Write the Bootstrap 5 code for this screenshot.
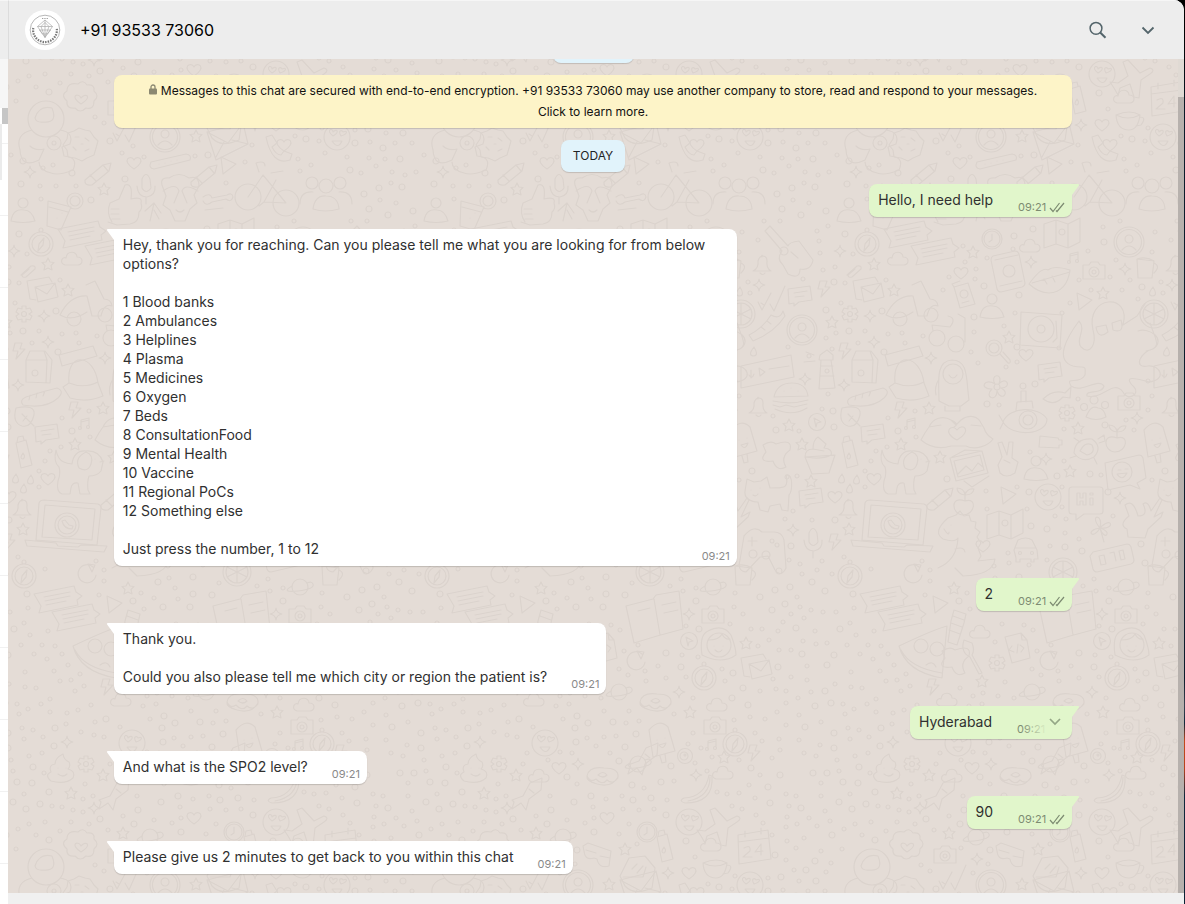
<!DOCTYPE html>
<html lang="en">
<head>
<meta charset="utf-8">
<meta name="viewport" content="width=device-width, initial-scale=1">
<title>Chat</title>
<link href="https://cdn.jsdelivr.net/npm/bootstrap@5.3.0/dist/css/bootstrap.min.css" rel="stylesheet">
<style>
body{font-family:Inter,"Liberation Sans",sans-serif;font-size:14px;line-height:19px;color:#303030;
  background:linear-gradient(#000 0,#000 30px,#0b1c2b 120px,#0b1c2b 75%,#3a4250 78%,#10283c 80%,#c4481c 82%,#b8411c 85%,#10283c 88%,#0c2234 100%)}
.desk{padding-right:1px}
.app-window{border-top-right-radius:10px;background:#fff}
.side-rail{width:8px;background:repeating-linear-gradient(#fff 0 71px,#f1f1f1 71px 72px)}
.rail-head{height:59px;background:#ededed;border-top:1px solid #f6f6f6}
.rail-search{height:49px;background:#f6f6f6}
.rail-thumb{height:16px;background:#c6c6c6}
.rail-row{height:56px;width:2px;background:#ebebeb}
.chat-head{height:59px;background:#ededed;border-top:1px solid #f6f6f6;border-left:1px solid #dcdcdc;padding:0 24px 0 16px;color:#000}
.chat-title{font-size:16px;line-height:21px;font-weight:400;margin-left:15px}
.head-tools{gap:26px}
.icon-btn{width:24px;height:24px;color:#54656b}
.chat-body{background:#e4dcd6}
.wallpaper{stroke:#dbd3cd;stroke-width:1.2;fill:none;stroke-linecap:round;stroke-linejoin:round}
.thread{padding:0 9% 19px;gap:12px}
.note-chip{background:#e1f3fb;border-radius:8px;padding:5px 12px 6px;line-height:21px;font-size:12px;color:#1f2426;box-shadow:0 1px 1px rgba(0,0,0,.15)}
.note-secure{background:#fdf4c8;color:#111;padding:5px 30px 6px}
.note-cut{width:81px;height:32px}
.bubble{border-radius:8px;padding:6px 7px 8px 9px;max-width:65%;box-shadow:0 1px 1px rgba(0,0,0,.16);gap:24px}
.bubble-in{background:#fff;border-top-left-radius:0}
.bubble-out{background:#e1f6cb;border-top-right-radius:0;gap:25px}
.bubble p{white-space:pre-line}
.tail{top:0;width:8px;height:12px}
.bubble-in .tail{right:100%;fill:#fff}
.bubble-out .tail{left:100%;fill:#e1f6cb}
.stamp{font-size:11px;line-height:15px;color:#8a8a8a;margin-bottom:-6px;gap:3px}
.bubble-out .stamp{color:#7d8b72}
.stamp-over{right:7px;bottom:8px}
.stamp-fade{background:linear-gradient(90deg,transparent,#e1f6cb 60%);width:44px;right:7px;bottom:2px;height:17px}
.more-btn{right:9px;top:8px;width:16px;height:16px;color:#94a686}
.bar{width:6px;background:#e0dad4;padding-top:38px}
.bar-thumb{background:#b7b1ad}
.chat-foot{height:11px;background:#f0f0f0}
</style>
</head>
<body>
<div class="desk vh-100">
<div class="app-window d-flex h-100 overflow-hidden">
  <aside class="side-rail flex-shrink-0">
    <div class="rail-head"></div><div class="rail-search"></div><div class="rail-thumb ms-auto w-75"></div><div class="rail-row"></div>
  </aside>
  <main class="d-flex flex-column flex-grow-1">
    <header class="chat-head d-flex align-items-center flex-shrink-0">
      <svg width="40" height="40" viewBox="0 0 40 40" fill="none" stroke="#777" stroke-width=".7" role="img" aria-label="Covid Resources">
        <circle cx="20" cy="20" r="20" fill="#fff" stroke="none"/>
        <circle cx="20" cy="20" r="14.8" stroke="#999"/>
        <path d="M12.500 16.500h15L20 27.500zM16 16.500l4 11 4-11-4-4zM12.500 16.500l7.500-6.500 7.500 6.500M14.500 20h11l-3 4h-5zM20 10v17" stroke="#aaa"/>
        <path d="M8.300 18A11.900 11.900 0 1 0 31.700 18" stroke="#777" stroke-width="2.200" stroke-dasharray="1.500 1.100"/>
        <path d="M17 8.500h6" stroke-dasharray="1 .7"/>
      </svg>
      <h1 class="chat-title mb-0 flex-grow-1">+91 93533 73060</h1>
      <div class="head-tools d-flex">
      <button class="icon-btn btn p-0 border-0 d-flex" aria-label="Search">
        <svg width="24" height="24" viewBox="0 0 24 24" fill="none" stroke="currentColor" stroke-width="1.500"><circle cx="10" cy="10.300" r="5.900"/><path d="M14.200 14.500l5.300 5.300" stroke-width="2"/></svg>
      </button>
      <button class="icon-btn btn p-0 border-0 d-flex" aria-label="Menu">
        <svg width="24" height="24" viewBox="0 0 24 24" fill="none" stroke="currentColor" stroke-width="1.800"><path d="M6.500 9.500l5.500 5.500 5.500-5.500"/></svg>
      </button>
      </div>
    </header>

    <section class="chat-body position-relative d-flex flex-grow-1 overflow-hidden">
      <svg class="wallpaper position-absolute top-0 start-0 w-100 h-100" aria-hidden="true">
        <defs><pattern id="doodles" width="413" height="748" patternUnits="userSpaceOnUse"></pattern></defs>
        <rect width="100%" height="100%" fill="url(#doodles)" stroke="none"/>
      </svg>
      <div class="thread position-relative d-flex flex-column justify-content-end flex-grow-1 overflow-hidden">
        <div class="note-chip note-cut align-self-center flex-shrink-0"></div>
        <div class="note-chip note-secure text-center">
          <svg width="8" height="11" viewBox="0 0 8 11" class="me-1 align-baseline" aria-hidden="true"><path d="M2 5V3a2 2 0 0 1 4 0v2" fill="none" stroke="#8b8871" stroke-width="1.300"/><rect y="4.500" width="8" height="6" rx="1" fill="#8b8871"/></svg>Messages to this chat are secured with end-to-end encryption. +91 93533 73060 may use another company to store, read and respond to your messages. Click to learn more.
        </div>
        <div class="note-chip align-self-center">TODAY</div>

        <div class="bubble bubble-out position-relative d-flex align-items-end align-self-end"><svg class="tail position-absolute" viewBox="0 0 8 12"><path d="M0 0h6q2 0 .5 2L0 11z"/></svg><p class="mb-0">Hello, I need help</p><span class="stamp d-flex align-items-center">09:21<svg width="16" height="11" viewBox="0 0 16 11" fill="none" stroke="currentColor" stroke-width="1.200"><path d="M1 6l3 3.500L10.500 1M7 8.500l1 1L15 1"/></svg></span></div>

        <div class="bubble bubble-in position-relative align-self-start w-100"><svg class="tail position-absolute" viewBox="0 0 8 12"><path d="M8 0H2Q0 0 1.500 2L8 11z"/></svg><p class="mb-0">Hey, thank you for reaching. Can you please tell me what you are looking for from below options?

1 Blood banks
2 Ambulances
3 Helplines
4 Plasma
5 Medicines
6 Oxygen
7 Beds
8 ConsultationFood
9 Mental Health
10 Vaccine
11 Regional PoCs
12 Something else

Just press the number, 1 to 12</p><span class="stamp stamp-over position-absolute">09:21</span></div>

        <div class="bubble bubble-out position-relative d-flex align-items-end align-self-end"><svg class="tail position-absolute" viewBox="0 0 8 12"><path d="M0 0h6q2 0 .5 2L0 11z"/></svg><p class="mb-0">2</p><span class="stamp d-flex align-items-center">09:21<svg width="16" height="11" viewBox="0 0 16 11" fill="none" stroke="currentColor" stroke-width="1.200"><path d="M1 6l3 3.500L10.500 1M7 8.500l1 1L15 1"/></svg></span></div>

        <div class="bubble bubble-in position-relative d-flex align-items-end align-self-start"><svg class="tail position-absolute" viewBox="0 0 8 12"><path d="M8 0H2Q0 0 1.500 2L8 11z"/></svg><p class="mb-0">Thank you.

Could you also please tell me which city or region the patient is?</p><span class="stamp">09:21</span></div>

        <div class="bubble bubble-out position-relative d-flex align-items-end align-self-end"><svg class="tail position-absolute" viewBox="0 0 8 12"><path d="M0 0h6q2 0 .5 2L0 11z"/></svg><p class="mb-0">Hyderabad</p><span class="stamp d-flex align-items-center pe-3 me-1">09:21</span><span class="stamp-fade position-absolute"></span><button class="more-btn btn p-0 border-0 d-flex position-absolute" aria-label="Message options"><svg width="16" height="16" viewBox="0 0 16 16" fill="none" stroke="currentColor" stroke-width="1.700"><path d="M3 5l5 5 5-5"/></svg></button></div>

        <div class="bubble bubble-in position-relative d-flex align-items-end align-self-start"><svg class="tail position-absolute" viewBox="0 0 8 12"><path d="M8 0H2Q0 0 1.500 2L8 11z"/></svg><p class="mb-0">And what is the SPO2 level?</p><span class="stamp">09:21</span></div>

        <div class="bubble bubble-out position-relative d-flex align-items-end align-self-end"><svg class="tail position-absolute" viewBox="0 0 8 12"><path d="M0 0h6q2 0 .5 2L0 11z"/></svg><p class="mb-0">90</p><span class="stamp d-flex align-items-center">09:21<svg width="16" height="11" viewBox="0 0 16 11" fill="none" stroke="currentColor" stroke-width="1.200"><path d="M1 6l3 3.500L10.500 1M7 8.500l1 1L15 1"/></svg></span></div>

        <div class="bubble bubble-in position-relative d-flex align-items-end align-self-start"><svg class="tail position-absolute" viewBox="0 0 8 12"><path d="M8 0H2Q0 0 1.500 2L8 11z"/></svg><p class="mb-0">Please give us 2 minutes to get back to you within this chat</p><span class="stamp">09:21</span></div>
      </div>
      <div class="bar position-relative flex-shrink-0"><div class="bar-thumb h-100"></div></div>
    </section>
    <footer class="chat-foot flex-shrink-0"></footer>
  </main>
</div>
</div>
<script src="https://cdn.jsdelivr.net/npm/bootstrap@5.3.0/dist/js/bootstrap.bundle.min.js"></script>
<script>
// Wallpaper doodles: each shape is drawn round its own centre, [radius, path].
const c=(x,y,r)=>`M${x-r} ${y}a${r} ${r} 0 1 0 ${2*r} 0a${r} ${r} 0 1 0 ${-2*r} 0`;
const shapes={
 star:[7,'M0-6l2 4 4 .5-3 3 1 4.500-4-2-4 2 1-4.500-3-3 4-.5z'],
 spark:[7,'M0-6q.5 5 6 6-5.500 1-6 6-.5-5-6-6 5.500-1 6-6z'],
 heart:[7,'M0 6C-14-3-3-9 0-3 3-9 14-3 0 6z'],
 cloud:[11,'M-7 6c-6-2-3-9 1-7 1-8 11-7 11-1 7 0 6 8 1 8z'],
 camera:[13,'M-11-6h6l2-3h7l2 3h5v14h-22z'+c(0,1,5)+c(0,1,2)],
 msg:[13,'M-13-7l22-3 2 14-13 2-5 4v-3l-5 1zM-7-3l13-2M-6 1l9-1'],
 chat:[24,'M-24-6l40-8 2 6 6 4-5 4 1 5-39 8 2-7zM-14-3l26-5M-13 1l25-5M-12 5l20-4'],
 gear:[9,'M-2-8h4v3l4-1 2 4-3 2 3 2-2 4-4-1v3h-4v-3l-4 1-2-4 3-2-3-2 2-4 4 1z'+c(0,0,2.500)],
 compass:[13,c(0,1,12)+c(0,1,9)+c(0,-13,2)+'M3-5l-1 7-5 6 1-7z'],
 clock:[11,c(0,0,10)+c(0,0,8)+'M0-5v6l-3 2'],
 bolt:[8,'M-3-8h7l-2 6h5l-9 10 2-8h-5z'],
 mail:[17,'M-14-10l22-4 3 5M-14-10l3 18 6 1M-6-4l20-4 3 14-20 5zM-6-4l12 7 8-11'],
 face:[13,c(0,0,13)+'M-4-1c-8-6 0-9 0-4 4-4 7 0 0 4zM4-1c-3-5 0-7 2-4 4-2 6 1-2 4zM-5 4q6 9 10 0z'],
 who:[16,c(0,0,15)+c(0,0,12.500)+c(0,-3,4)+'M-7 8q7-8 14 0'],
 man:[14,c(0,-9,5)+'M-12 9q2-13 13-11 8 0 11 11-12 3-24 0z'],
 bell:[11,'M-9 6q6-3 5-10c2-7 9-6 9 0q-1 7 4 10zM-2 8q3 3 5 0M0-10v2'],
 phone:[19,'M-15-16l22-5q3 0 4 3l6 29q0 3-3 4l-21 5q-3 0-4-3l-6-29q0-3 2-4zM-13-12l23-5M-8 14l22-5'+c(1,-1,6)],
 lips:[21,'M-21 4q13-18 19-14 6-5 22 0-3 22-21 23-10 0-20-9zM-18 3q17-5 38-11M-6-1l3 5M2-4l3 6'],
 map:[19,'M-18-10l12-4 12 4 12-6v24l-12 6-12-4-12 4zM-6-14v24M6-10v24'+c(0,-2,3)],
 clip:[8,'M-7 4l10-9q5-1 4 3l-9 8q-4 1-4-2l7-6'],
 mug:[11,'M-10-9l17 2-2 17h-14zM7-5q7 3 0 10M-10-9q9-3 17 2'],
 scooter:[27,'M-27 13q10-20 27-19l5 20h9q3-13 11-10-1-7-8-7l-9-18-9 4M-27 13q12 7 27-3'+c(-13,17,7)+c(18,13,7)],
 card:[12,'M-10-9l14-4 7 21-15 4zM-10-9l-2-3 8-3'+c(0,-2,4)+'M-2 7l7-2'],
 deck:[22,'M-20-17l41 3-2 33-40-3z'+c(0,0,13)+c(0,0,4)+'M15-8l1 17-4 4'],
 octo:[46,'M-17-17c-8-35 39-38 30-5M-14-20l10-2 2 7q-10 8-12-5zM2-24l9-3q4 14-8 10zM-17-17c4 14-3 26-12 17-6-8 6-17-2-26-12 16-25 39-6 45 11 3 13-3 12 9-6 11-20 0-14 11 11 8 27-9 33 0-2 9-19 3-17 10 16 4 26-17 36-4 4 10 18 2 11-5-13-13 4-8 15-5 18-2 12-17-1-16-16 3-7-15 5-17 14-10-4-22-15-18M13-22l14-9 8-12M40-24c6 18 13 25-4 28'],
 checks:[14,'M-14 4l4 8 9-17M-2 6l4 7 11-25M-11 5l3 2'],
 shoe:[18,'M-18 8q14-7 22-20 9 5 12-4l2 5Q8 5-14 14zM-6 0l4 3M0-6l4 3'],
 goggles:[19,c(-10,8,8)+c(9,14,8)+'M-14 1l-1-6 18 2q7-9-2-11M18 12v-24l-7-4'],
 lens:[15,c(-2,-2,8)+c(-2,-2,5)+'M4 4l8 9q3 1 2-3l-7-8'],
 voice:[27,'M-26-4l50-11 3 22-53 11zM-16 0v8M-18 5q3 5 5-1M-8-2l6 4-5 4zM2-1l20-3'],
 tower:[18,'M-6-12h10l4 28-16 1zM-8-12h14v-5l-6-5-7 5zM-6-6h12M-7 4h14M-13-17l-8-3M-12-11l-11 1'+c(0,-1,2)],
 milk:[17,'M-13-8l4-9h15l7 9-2 23-24-1zM-13-8h21l-1 23M5-17l3 9'+c(-4,5,3)],
 pack:[25,'M-23-18l34-9 4 10-35 10zM-13 10c-3-32 25-30 29 0l5 13q-16 7-33 2l-7-11zM-13 10q15 6 29-1'],
 penguin:[24,'M-14 18c0-18-4-40 13-41 17 0 14 20 17 40l-8 6h-12zM-8 23v5h15v-5M-14-4q-5 8-3 16'+c(0,-9,10)+'M-4-8q4 6 8 0'],
 flower:[13,c(0,0,3)+'M-2-3c-6-10 9-12 4 0 7-9 14 4 2 4 10 5 0 14-4 3 0 12-14 6-5-2-14 0-7-12 3-5z'],
 burger:[18,'M-17-2q3-14 18-14 14 0 16 13zM-18 2q18 4 35-1M-18 6l7 2 6-2 8 2 13-3M-16 10q17 8 32-1M-7-8h0M0-11h0M7-8h0'],
 bread:[21,'M-18 8q-4-5 3-8 15-5 31-9 8 3 1 10-12 11-35 7zM-11-2l-1 5M-4-4l-1 5M4-6l-2 5'],
 leaf:[12,'M-9-10q20-4 18 7-3 13-12 11-10-3-6-18zM9 8l-12-12M-2 3l4-5'],
 note:[7,'M-5 4v-8l8-2v8M-5-2l8-2'+c(-6,4,1.500)+c(2,3,1.500)],
 sub:[25,'M-22 2c6-16 36-16 44-3 0 16-35 19-44 3zM-9-10l1-8 15-1 1 7M-4-18v-11h5v11M-22 2l-4-7M-22 3l-3 6'+c(3,0,9)+c(3,0,5)],
 fish:[14,'M-14 4q10-10 22-6l6-6-1 11-7-1Q-3 12-14 4z'],
 paw:[14,'M-9 9q5-13 12-9 6 0 8 9-10 5-20 0z'+c(-11,-1,3.500)+c(-1,-8,4)+c(10,-3,3.500)],
 hands:[36,'M-36 8c3-6 5-9 8-13 4-9 14-12 22-7l5 5 5-5c8-6 17-4 20 3l3 5q2 7 9 11c-4 6-17 12-27 7h-15q-17 5-30-6zM0 8c-16-8-5-17 0-10 6-8 16 1 0 10zM-28-5l12-2M24-6l-10-1M-6-12q9 4 3 7'],
 turtle:[18,'M-14 5q1-15 18-14 11 8 2 18-12 7-20-4zM-8 3q5-10 12-6 4 8-5 10zM10-9l6-4 1 6-6 2M-12 8l-6 2M-8-6l-6-4M6 10l3 6'],
 battery:[12,'M-11-6l18 2 1 2h3v5h-3v3l-20-1z'],
 apple:[14,'M0-2c-15-6-14 13-2 14 12 0 15-18 2-14v-9M0-8q-8-1-8-7 7 0 8 7 2-7 9-6-1 6-9 6'],
 pop:[20,'M-13-12q10-12 19-3l7 24-22 6zM-2 14l2 7 4-1-1-8M-5-2h0M3-4h0M-3 3q4 6 7-2z'],
 cake:[20,'M-15 0l7 17 17-1 6-18zM-15 0q0-8 8-8 0-9 5-12l8 7-2 4q9 1 7 7-9 5-26 2M-7-8l11 2'],
 bottle:[16,'M-7-10l10-3 6 25-11 3zM-6-11l1-5 5-1 1 4M0 0q-4 6 0 6 3-2 0-6z'],
 splat:[16,'M-14-9q8-5 13-1 17-6 14 6-10 7-4 17-9 5-13-6-16 2-7-9z'],
 dog:[25,'M-25-22q-3 12 3 17 2 6-1 14-2 11 4 13h8l1-6q1-6 7-5l2 11h10l-2-4q-1-8 1-14 8 0 12-5l2-9q-4-12-17-11-12-1-14 13-10-1-13-6-2-3-3-8zM5-20q8 3 5 12-3 9-12 4-5-10 7-16M14-13h0M19-10l4-1'],
 photo:[20,'M-19-9l32-7 6 22-32 8zM-15-6l26-6 4 15-26 7zM-11 7l8-8 6 5 6-8 5 4M-17-10l13-7 17 1M-5 14l8 6 17-11'],
 peace:[17,'M-10 5l4-8-4-14 4-1 5 13 2-13h4l-1 16 6 4-3 11q-9 6-15 0zM-4 0l6 3'],
 bubble:[20,'M-20-10l34-8q3 0 4 3l3 20-9 5 3 6-10-4-22 5z'+c(-3,-1,10)+'M-7-3h3M0-4h3M-8 1q5 8 10-1z'],
 cat:[24,'M-22-6l2-12 7 3 7-1 6-4 3 11c10-1 20 3 16-13 8-2 6 17 3 20l-1 16-6-1-2-6-10 2-2 6-8-2-2-8c-9 0-14-5-13-11zM-16-7h0M-7-9h0M-14-2q3 2 5-1'],
 drop:[5,'M0-5q-7 9 0 9 5-1 0-9z'],
 laptop:[42,'M-28 13l3-37q1-3 5-3l54 4q3 1 3 4l-4 37zM-22 10l3-32 50 4-3 31zM-39 13l31 3 2 3 20 1 3-2 26 1-3 6-77-6z'+c(3,-2,12)+c(3,-2,9)+'M-2-6q2 8 10 8l1-3-4-1-4-5z'],
 pencil:[14,'M-14 7l18-15 8-2-2 8-17 14q-8 1-7-5zM-9 2l6 6M4-8l5 6'],
 play:[9,'M-6-9l15 7-13 10z'],
 hi:[17,'M-14-14h28q3 0 3 3v21q0 3-3 3h-16l-8 6v-6h-4q-3 0-3-3v-21q0-3 3-3zM-9-8h3v5h3v-5h3v12h-3v-4h-3v4h-3zM4-3h3v7h-3zM4-8h3v2h-3z'],
 ok:[22,'M-14 20l-1-8q-9-4 2-13l-4-11q8-7 13 11 11 0 5-12 5-4 8 7l9-13 2 2-8 17 9-5-2 5-13 12-3 9z'],
 pad:[22,'M-18-12q10-12 18-4h12q8 0 10 8l2 28q-5 10-11 2l-7-14-8 1-14 15q-9-1-6-12zM-10-11v9M-14-7h9'+c(10,-7,2)+c(15,-3,2)+c(-9,6,4)+c(4,7,4)],
 mic:[14,'M-4-9q4-9 8 0l1 9q-5 7-9 0zM-9-2q1 11 10 11 9-2 8-11M0 9v7'],
 dino:[32,'M-12-26q-16 14-5 21 12 4 15-1-1 22-20 30M-12-26l8-3 4-4 4 5 5-1 2 6 5 1-1 6 5 4-3 5 4 6-3 5 3 8-3 5 17-2q-2 16-32 17l-8-8M-5 5q9-3 10 3M-9-19h0M-16-15q5 8 5 3'],
 clover:[13,'M0 0C-12-14 4-15 0 0 12-13 16 2 0 0 14 4 4 14 0 0-7 13-16 2 0 0l4 14'],
 car:[13,'M-12 2l4-10q8-4 14 0l5 10 1 9h-4v3h-3v-3h-11v3h-4v-4zM-10 0h20'+c(-6,5,1.500)+c(6,5,1.500)],
 panel:[22,'M-20-5l34-8q3 0 4 3l3 13q0 3-3 4l-34 8q-3 0-4-3l-3-13zM-14-1l5-1 2 9-5 1zM-3-4l4-1 2 9M6-6l4-1 2 9-4 1z'],
 pizza:[24,'M24-24q-12 3-48 20 7 26 43 32zM-22 0q9 18 41 23'+c(-2,-4,7)+c(14,-1,7)+'M3 15q7-5 10 2'],
 orange:[15,c(0,0,14)+c(0,0,11)+'M0-11V11M-10-5L10 5M-10 5L10-5'],
 book:[28,'M-28-11l27-7 3-4 23-4 4 38-26 7-23 7zM0-18l6 36M-16-6l12-3M8-12l14-3M10-4l14-3'],
 tube:[18,'M-4-18l12 4-2 9-7 22-9-3 3-21zM-5-12l11 4M-7-5l11 4M-9 2l11 4'],
 file:[15,'M-12-11l16-4 6 7 3 18-18 5zM4-15l1 7h5M-5-2l-3 4 5 2M3-3l4 3-3 4M1-4l-1 9'],
 brush:[18,'M-10-18l8 3q3 7 0 12l10 18-3 1-9-17q-10-5-6-17z'],
 redo:[10,'M6-6a9 9 0 1 0 3 8M1-9l7 1-3 7z'],
 girl:[18,'M-16 10q-3-20 6-24 15-8 23 4 5 13 5 20-14 10-34 0'+c(1,0,12)+'M-9-5q10 0 13-6 3 6 8 5M-4 1h0M5 1h0M-3 5q4 4 7 0'],
 cursor:[9,c(0,0,8.500)+'M-3-4l7 4-4 1-1 4z'],
 planet:[13,c(0,0,8)+'M-8-1q-12 7 6 5 17-2 15-7-1-3-6-1'],
 donut:[17,'M-15 0q2-10 17-8 15 0 14 9-6 11-21 7-11-3-10-8zM-4-1q5-5 9 0-4 4-9 0zM-15 0q3 7 9 3 6 7 11 1 6 5 11-2'],
 eye:[8,c(0,0,7.500)+c(-1,0,4)+c(0,-1,1)],
 poop:[15,'M-12 13q-7-6 0-9-3-7 4-8 0-6 8-10 1 6 6 8 2 4-1 7 8 2 5 9-8 7-22 3zM-5 0h0M3 0h0M-5 6q5 4 9 0'],
 banana:[16,'M12-15l3 1q2 27-27 27-7-2-1-5 21-1 25-23zM13-13q0 20-22 24'],
 plane:[19,'M-4-4l-5-14 5-2 12 13 10-5q6 2 0 6l-9 6-2 18-5-1-4-13-10 4-2 7-4-7-4-6 8 1z'],
 cal:[19,'M-14-12l30-5 3 29-32 5zM-14-5l31-4M-7-16v6M9-19v6M-8 1q7-4 6 3l-7 6h9M9-3l-6 8 8-1M9-3v11'],
 badge:[17,'M-3-14q5-5 9 1 8-1 7 6 6 5 0 10 0 9-8 7-6 6-11 0-9 1-8-7-7-6 0-10 0-9 11-7zM0 6c-12-8-3-12 0-6 5-6 12-1 0 6z'],
 shades:[17,'M-16-9l5-3 23 8-2 15q-10 3-12-7l-3-1q-9 3-10-7zM-13-5l10 3M1 1l10 2'],
 bag:[18,'M-17 4l9-18 16-2 10 12-3 20q-18 8-27-2zM-5-3l5-5M0 1l6-7M-14 5h20l3-10'],
 cup:[14,'M-14-5q14-6 24 0-2 15-11 15-12 0-13-15zM-14-5q12 6 24 0M10-3q7 0 1 8l-5 1'],
 cookie:[17,'M-2-16l6 2 5 1 4 6 4 4-2 7-2 7-7 3-5 3-7-3-7-1-1-7-4-5 4-6 1-6 6-2zM-6-7h4M4-6l4 3M-8 3l3 3M4 7l4-2M0 0h2'],
 env:[19,'M-20-8l36-9 5 21-32 16zM-20-8l21 11 15-20M-11 17l8-15M21 4L5 0'],
 call:[14,'M-10-11l6-2 5 8-5 4q4 8 9 8l3-4 8 3-2 6q-18 6-24-23z'],
 pill:[21,'M-19 0l35-8q6 1 4 6l-36 9q-6-1-3-7zM-11 2h0M-5 1h0M1-1h0M7-2h0'],
 bike:[32,c(-19,5,13)+c(19,11,13)+'M-19 5l15-22 23 28-22-1 12-22M-8-20l-3-9M-11-29q9-3 9 3M4-19l12-2M-3 10l-5 4'],
 group:[28,c(-14,-12,6)+c(0,-9,7)+c(14,-12,6)+'M-26 9q0-13 13-12M26 9q0-13-13-12M-13 14q2-14 13-13 12 0 13 13-14 4-26 0z'],
 thumb:[21,'M-14-4l9-4 6-14q8-3 6 14 12-3 10 4 2 6-2 9 0 11-9 12l-13 1-9-3M-14-4q-4 10 2 19M-13 2h8M-13 7h8M-12 12h8'],
 hide:[23,'M-18-13q-2-8 7-7 10-7 20 0 10-3 10 8l-5 9 3 8-7 6-5 12h-10l-5-11-7-5 3-9zM-17-7q13-9 16 0l-5 12M18-7q-13-8-16 0l5 12M-4 12q4 4 8 0'],
 drink:[18,'M-14-9l23 6-10 23-14-4zM-13-3l19 5'+c(13,-9,8)+c(13,-9,5)+'M0 3h0M-5 8h0'],
 arrow:[10,'M-3 9l4-18 7 10M1-9l-9 8M1-2l5 9'],
 wrench:[14,'M-14-5q7-5 9 1l15-3q5-3 6 2-2 6-7 2l-14 3q-6 5-9-1M-12 8l18-2'],
 astro:[32,c(2,-11,18)+'M-9-12q4-13 17-10 6 15-8 14-8 1-9-4M-12 0q-17 4-12 20 1 19 19 10l5-11q-9 2-14-3M16 0q14 2 10 14l-8 3 2 9q15 1 9 14-14 6-22 3-12-3-12-11'+c(10,13,7)+c(10,13,2)],
 guitar:[25,'M-25-22l17 20q-6 8 1 14l5 9q12 6 12-5 11 2 13-9l-14-19q-10 1-11 5l-18-20zM1-1l7 6'+c(-6,-2,4)],
 rocket:[16,'M-15 5l11-4 7-13 12-5-1 12-12 9-3 11-5-7-9 6 2-7zM2-6l5 4']
};
// Places of the doodles on the wallpaper; they wrap round the repeating tile.
const places=`compass 867 243,chat 908 235,chat 935 252,star 973 252,clock 992 239,cloud 1030 246,map 1062 234,who 1129 242,note 1075 258,spark 1031 262,camera 1094 271,spark 1125 269,mug 1147 268,bell 762 265,guitar 790 253,cloud 898 259,star 874 264,spark 840 251,clip 854 271,phone 1008 272,lips 1050 280,heart 961 273,mail 867 291,star 894 290,scooter 913 302,card 964 296,man 992 308,deck 1041 329,octo 1110 347,play 1083 302,star 1103 293,drop 1153 292,orange 1154 314,checks 772 298,msg 801 296,bolt 823 289,spark 759 285,gear 850 314,spark 870 316,star 832 322,shoe 767 327,who 802 330,goggles 947 330,star 1009 337,lens 996 350,heart 1026 355,spark 931 358,spark 874 342,drop 754 352,voice 767 370,tower 827 372,spark 805 379,bolt 844 351,milk 865 368,pack 908 373,penguin 953 383,flower 997 387,msg 1051 372,spark 844 385,burger 791 399,bread 867 397,bell 758 407,cursor 817 422,star 789 425,bolt 900 410,star 929 408,leaf 851 418,note 912 424,msg 874 434,sub 1025 420,fish 1057 395,gear 1067 413,paw 1095 408,camera 1129 402,spark 1137 418,star 1078 428,hands 957 432,turtle 1088 448,battery 1051 442,apple 1117 440,pop 1157 442,cake 820 457,bottle 849 453,star 901 444,star 802 444,splat 777 454,dog 907 472,star 940 457,photo 969 467,peace 1008 460,man 1036 470,spark 1046 459,star 1070 471,bubble 1125 473,cat 767 497,msg 812 498,heart 835 497,star 811 481,drop 842 479,drop 857 480,drop 850 489,heart 874 479,bell 848 509,laptop 890 527,pencil 941 498,apple 965 503,play 1007 496,face 1048 497,hi 1086 501,spark 1120 498,ok 1142 517,pad 762 548,spark 793 530,mic 813 542,bolt 834 542,star 849 529,dino 960 544,map 1005 525,heart 983 546,clover 1100 528,car 1026 548,panel 1113 557,compass 850 575,redo 913 573,chat 884 600,chat 902 618,star 954 588,play 939 605,orange 1063 572,tube 958 628,book 1067 617,camera 1126 615,spark 1102 614,planet 1126 587,mug 1158 575,pizza 923 650,file 1017 648,cloud 980 632,brush 974 658,gear 997 663,redo 1049 660,girl 1131 645,cursor 1102 641,star 1159 643,mail 1168 668,compass 1117 677,splat 956 660,star 982 681,bolt 932 687,planet 1032 692,donut 1068 702,spark 1092 692,star 1103 712,cloud 1130 705,cloud 947 700,camera 1128 726,compass 1148 743,spark 893 742,face 958 743,pop 1075 742,eye 1098 756,note 1126 745,bolt 1166 753,star 1137 757,poop 889 768,gear 912 764,star 929 775,spark 991 764,planet 1051 764,donut 1015 776,heart 972 768,cloud 952 776,cloud 1136 773,banana 1110 790,spark 1109 775,star 897 793,rocket 940 795,spark 920 808,star 949 833,face 1102 822,plane 1132 828,cloud 1124 845,cal 1165 847,badge 907 846,camera 945 855,planet 976 837,spark 977 859,shades 1012 855,star 1038 849,bottle 1077 847,bag 1050 872,cup 1130 868,spark 1081 873,checks 953 877,who 991 885,star 1022 884,face 1163 885,heart 1102 873,clock 1060 832,heart 1020 818,cookie 907 144,env 1053 140,call 1102 148,heart 1110 145,pencil 925 173,heart 960 163,pill 996 162,pencil 1031 175,play 1053 166,bike 1093 192,group 1152 195,mic 146 188,thumb 124 207,hide 180 198,drink 62 210,man 23 212,arrow 153 212,star 104 189,wrench 217 202,astro 44 130,spark 30 172,rocket 230 760`;
const W=413,H=748,wrap=(v,n)=>((v%n)+n)%n,placed=[];let art='';
function put(d,x,y,r){for(const i of [-W,0,W])for(const j of [-H,0,H]){const X=x+i,Y=y+j;if(X>-r&&X<W+r&&Y>-r&&Y<H+r)art+=`<path transform="translate(${X} ${Y})" d="${d}"/>`}}
for(const item of places.split(',')){const [name,px,py]=item.split(' ');const s=shapes[name];if(!s)continue;const x=wrap(px-8,W),y=wrap(py-59,H);placed.push([x,y,s[0]]);put(s[1],x,y,s[0]+6)}
// Small rings fill the gaps between the doodles.
let seed=7;const rnd=()=>(seed=(seed*16807)%2147483647)/2147483647;
for(let n=0;n<5000;n++){const x=Math.round(rnd()*W),y=Math.round(rnd()*H),r=rnd()<.3?3:2;
 if(placed.every(([a,b,q])=>{const dx=Math.min(Math.abs(a-x),W-Math.abs(a-x)),dy=Math.min(Math.abs(b-y),H-Math.abs(b-y));return Math.hypot(dx,dy)>q+r+(q<4?6:2)})){placed.push([x,y,r]);put(c(0,0,r),x,y,r+2)}}
document.getElementById('doodles').innerHTML=art;
</script>
</body>
</html>
